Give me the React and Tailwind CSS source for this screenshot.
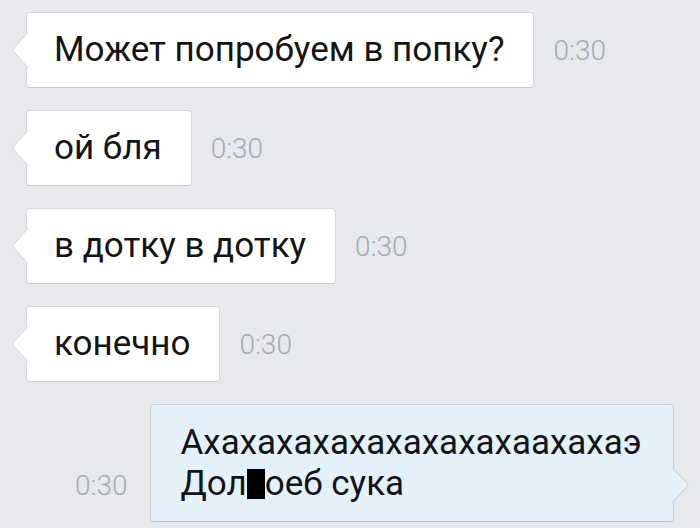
const incoming = [
  { text: 'Может попробуем в попку?' },
  { text: 'ой бля' },
  { text: 'в дотку в дотку' },
  { text: 'конечно' },
]

function Time({ className = '' }) {
  return (
    <span className={`text-[28px] font-light leading-none text-[#a6abb1] ${className}`}>0:30</span>
  )
}

function TailLeft() {
  return (
    <svg className="absolute -left-[15px] top-1/2 -translate-y-1/2" width="16" height="36" viewBox="0 0 16 36">
      <path d="M16 0 L1.5 16.5 Q0.5 18 1.5 19.5 L16 36 Z" fill="#ffffff" />
      <path d="M16 0.5 L1.5 16.5 Q0.5 18 1.5 19.5 L16 35.5" fill="none" stroke="#cfd3d8" strokeWidth="1" />
    </svg>
  )
}

function TailRight() {
  return (
    <svg className="absolute -right-[16px] bottom-[18px]" width="17" height="36" viewBox="0 0 17 36">
      <path d="M0 0 L15.5 16.5 Q16.5 18 15.5 19.5 L0 36 Z" fill="#e4f1fb" />
      <path d="M0 0.5 L15.5 16.5 Q16.5 18 15.5 19.5 L0 35.5" fill="none" stroke="#bccbd8" strokeWidth="1" />
    </svg>
  )
}

export default function App() {
  return (
    <div
      className="h-[528px] w-[700px] overflow-hidden bg-[#e7e9ed] pl-[26px] pt-[12px]"
      style={{ fontFamily: 'Roboto, "Noto Sans", sans-serif' }}
    >
      <div className="flex flex-col gap-[22px]">
        {incoming.map((m, i) => (
          <div key={i} className="flex items-center gap-[19px]">
            <div className="relative rounded-[4px] border border-[#d3d6db] border-b-[#c4c8cd] bg-white py-[17px] pl-[27px] pr-[29px] text-[35px] leading-[40px] text-[#141414]">
              <TailLeft />
              {m.text}
            </div>
            <Time className="pt-[2px]" />
          </div>
        ))}
        <div className="flex items-end gap-[23px] pl-[49px]">
          <Time className="mb-[22px]" />
          <div className="relative w-[524px] rounded-[4px] border border-[#c3d0dc] border-b-[#b2bfcb] bg-[#e4f1fb] py-[17px] pl-[29px] text-[35px] leading-[41px] text-[#141414]">
            <TailRight />
            <div>Ахахахахахахахахахаахахаэ</div>
            <div>
              Дол<span className="inline-block h-[30px] w-[18px] translate-y-[4px] bg-black" />оеб сука
            </div>
          </div>
        </div>
      </div>
    </div>
  )
}
